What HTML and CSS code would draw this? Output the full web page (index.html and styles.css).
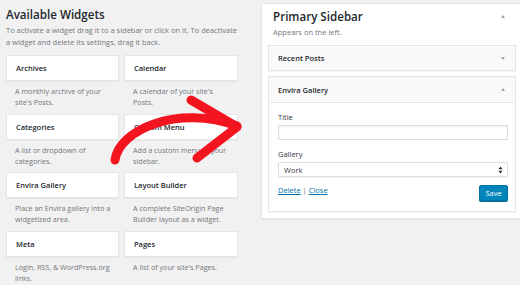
FILE: index.html
```html
<!DOCTYPE html>
<html lang="en">
<head>
    <meta charset="UTF-8">
    <title>Widgets</title>
    <link rel="stylesheet" href="styles.css">
</head>
<body>
    <div class="wrap">
        <div class="available">
            <h2>Available Widgets</h2>
            <p class="intro">To activate a widget drag it to a sidebar or click on it. To deactivate a widget and delete its settings, drag it back.</p>
            <div class="widget-grid">
                <div class="widget">
                    <div class="widget-top">Archives</div>
                    <p class="widget-desc">A monthly archive of your site's Posts.</p>
                </div>
                <div class="widget">
                    <div class="widget-top">Calendar</div>
                    <p class="widget-desc">A calendar of your site's Posts.</p>
                </div>
                <div class="widget">
                    <div class="widget-top">Categories</div>
                    <p class="widget-desc">A list or dropdown of categories.</p>
                </div>
                <div class="widget">
                    <div class="widget-top">Custom Menu</div>
                    <p class="widget-desc">Add a custom menu to your sidebar.</p>
                </div>
                <div class="widget">
                    <div class="widget-top">Envira Gallery</div>
                    <p class="widget-desc">Place an Envira gallery into a widgetized area.</p>
                </div>
                <div class="widget">
                    <div class="widget-top">Layout Builder</div>
                    <p class="widget-desc">A complete SiteOrigin Page Builder layout as a widget.</p>
                </div>
                <div class="widget">
                    <div class="widget-top">Meta</div>
                    <p class="widget-desc">Login, RSS, &amp; WordPress.org links.</p>
                </div>
                <div class="widget">
                    <div class="widget-top">Pages</div>
                    <p class="widget-desc">A list of your site's Pages.</p>
                </div>
            </div>
        </div>

        <div class="sidebar-panel">
            <div class="sidebar-name">
                <h2>Primary Sidebar</h2>
                <span class="caret up"></span>
            </div>
            <p class="sidebar-desc">Appears on the left.</p>

            <div class="box">
                <div class="box-top">
                    <span>Recent Posts</span>
                    <span class="caret down"></span>
                </div>
            </div>

            <div class="box open">
                <div class="box-top">
                    <span>Envira Gallery</span>
                    <span class="caret up"></span>
                </div>
                <div class="box-body">
                    <label class="field-label">Title</label>
                    <div class="text-input"></div>
                    <label class="field-label">Gallery</label>
                    <div class="select">
                        <span>Work</span>
                        <svg width="5" height="8" viewBox="0 0 5 8"><path d="M2.5 0.5 L4.6 3.2 H0.4 Z M2.5 7.5 L4.6 4.8 H0.4 Z" fill="#333"/></svg>
                    </div>
                    <div class="actions">
                        <div class="links"><a href="#">Delete</a> <span class="sep">|</span> <a href="#">Close</a></div>
                        <button class="save">Save</button>
                    </div>
                </div>
            </div>
        </div>
    </div>

    <!-- hand drawn arrow on top -->
    <svg class="arrow" width="520" height="285" viewBox="0 0 520 285">
        <path d="M115 160 C119 130 178 104 237 126" />
        <path d="M191 100 L237 127 L197 158" />
    </svg>
</body>
</html>
```

FILE: styles.css
```css
body {
    margin: 0;
    background: #f1f1f1;
    font-family: 'Open Sans', 'Noto Sans', sans-serif;
    color: #23282d;
    overflow: hidden;
    width: 520px;
    height: 285px;
    position: relative;
}
.wrap {
    display: flex;
    align-items: flex-start;
}
.available {
    width: 232px;
    padding-left: 6px;
    flex-shrink: 0;
}
.available h2 {
    margin: 0;
    padding-top: 7px;
    font-size: 11.6px;
    font-weight: 600;
    line-height: 16px;
}
.intro {
    margin: 1px 0 0;
    font-size: 7.5px;
    line-height: 12px;
    color: #72777c;
}
.widget-grid {
    display: grid;
    grid-template-columns: 113px 114px;
    column-gap: 5px;
    row-gap: 5.5px;
    margin-top: 7px;
}
.widget-top {
    height: 24px;
    line-height: 24px;
    padding: 0 9px;
    background: #fff;
    border: 1px solid #e5e5e5;
    box-shadow: 0 1px 1px rgba(0, 0, 0, 0.04);
    font-size: 7.5px;
    font-weight: 600;
}
.widget-desc {
    margin: 5px 0 0;
    padding: 0 8px 0 9px;
    font-size: 7.2px;
    line-height: 11px;
    color: #72777c;
}
.sidebar-panel {
    margin: 3px 0 0 23px;
    width: 248px;
    flex-shrink: 0;
    background: #fff;
    border: 1px solid #e5e5e5;
    box-shadow: 0 1px 1px rgba(0, 0, 0, 0.04);
    padding: 0 6px 6px;
}
.sidebar-name {
    display: flex;
    justify-content: space-between;
    align-items: center;
    padding: 4px 11px 0 5px;
}
.sidebar-name h2 {
    margin: 0;
    font-size: 11.6px;
    font-weight: 600;
    line-height: 17px;
}
.sidebar-desc {
    margin: 1px 0 0 5px;
    font-size: 7.5px;
    line-height: 12px;
    color: #72777c;
}
.caret {
    width: 0;
    height: 0;
    border-left: 2.5px solid transparent;
    border-right: 2.5px solid transparent;
}
.caret.up {
    border-bottom: 3px solid #a0a5aa;
}
.caret.down {
    border-top: 3px solid #a0a5aa;
}
.box {
    margin-top: 7px;
    border: 1px solid #e5e5e5;
    background: #fafafa;
    box-shadow: 0 1px 1px rgba(0, 0, 0, 0.04);
}
.box + .box {
    margin-top: 5px;
}
.box-top {
    display: flex;
    justify-content: space-between;
    align-items: center;
    height: 24px;
    padding: 0 10px 0 9px;
    font-size: 7.5px;
    font-weight: 600;
}
.box.open .box-top {
    height: 25px;
}
.box-body {
    background: #fff;
    border-top: 1px solid #e5e5e5;
    padding: 9px 7px 10px 9px;
}
.field-label {
    display: block;
    font-size: 7.5px;
    line-height: 10px;
    color: #32373c;
}
.text-input {
    margin-top: 3px;
    height: 13px;
    border: 1px solid #ddd;
    box-shadow: inset 0 1px 2px rgba(0, 0, 0, 0.07);
    background: #fff;
}
.text-input + .field-label {
    margin-top: 9px;
}
.select {
    margin-top: 3px;
    height: 13px;
    border: 1px solid #ddd;
    border-radius: 2px;
    box-shadow: 0 1px 1px rgba(0, 0, 0, 0.05);
    background: #fff;
    display: flex;
    justify-content: space-between;
    align-items: center;
    padding: 0 4px 0 5px;
    font-size: 7.5px;
    color: #32373c;
}
.actions {
    display: flex;
    justify-content: space-between;
    align-items: flex-start;
    margin-top: 8px;
}
.links {
    font-size: 7.5px;
    line-height: 10px;
}
.links a {
    color: #0073aa;
    text-decoration: underline;
}
.sep {
    color: #72777c;
}
.save {
    width: 29px;
    height: 16px;
    padding: 0;
    border: 1px solid #0073aa;
    border-radius: 2px;
    background: #0085ba;
    box-shadow: 0 1px 0 #006799;
    color: #fff;
    font-family: 'Open Sans', 'Noto Sans', sans-serif;
    font-size: 7.5px;
}
.arrow {
    position: absolute;
    top: 0;
    left: 0;
    pointer-events: none;
}
.arrow path {
    fill: none;
    stroke: #f2141e;
    stroke-width: 9;
    stroke-linecap: round;
    stroke-linejoin: round;
}
```
